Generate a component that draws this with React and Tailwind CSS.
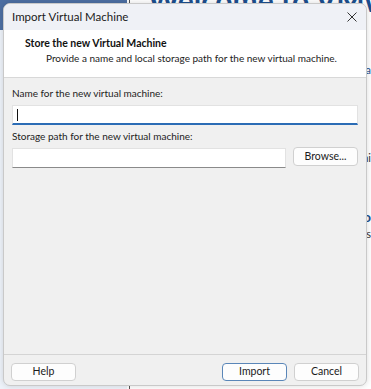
import React from 'react';

const font = { fontFamily: 'Lato, "Noto Sans", sans-serif' };

const Button = ({ children, primary, className = '' }) => (
  <button
    className={`h-[18px] rounded-[4px] bg-[#fdfdfd] text-[10.5px] text-[#1a1a1a] leading-none border ${
      primary ? 'border-[#5a86b8]' : 'border-[#d0d0d0]'
    } ${className}`}
  >
    {children}
  </button>
);

export default function App() {
  return (
    <div className="relative w-[371px] h-[389px] overflow-hidden bg-[#eef3fa]" style={font}>
      {/* background app */}
      <div className="flex h-full">
        <div className="w-[127px] flex flex-col">
          <div className="h-[30px] bg-[#4d6fa3]" />
          <div className="flex-1 bg-[#eef3fa]" />
        </div>
        <div className="w-[3px] bg-white border-r border-[#555]" />
        <div className="flex-1 bg-white relative overflow-hidden">
          <div className="absolute -top-[22px] left-[18px] text-[30px] font-bold text-[#1c4f8f] whitespace-nowrap">
            Welcome to VMware
          </div>
          <div className="absolute top-[62px] right-0 text-[11px] text-[#1c4f8f]">a</div>
          <div className="absolute top-[150px] right-0 text-[11px] text-[#333]">ni</div>
          <div className="absolute top-[206px] right-0 text-[14px] font-bold text-[#1c4f8f]">o</div>
          <div className="absolute top-[226px] right-0 text-[11px] text-[#333]">s</div>
        </div>
      </div>

      {/* dialog */}
      <div className="absolute left-[3px] top-[3px] w-[364px] h-[383px] rounded-[7px] overflow-hidden border border-[#c9c9c9] bg-[#f0f0f0] flex flex-col shadow-[0_0_6px_rgba(0,0,0,0.15)]">
        <div className="h-[26px] shrink-0 bg-[#eff1f6] flex items-center justify-between pl-[8px] pr-[9px]">
          <span className="text-[11.5px] text-[#1a1a1a]">Import Virtual Machine</span>
          <svg width="10" height="10" viewBox="0 0 10 10" className="text-[#333]">
            <path d="M0.5 0.5 L9.5 9.5 M9.5 0.5 L0.5 9.5" stroke="currentColor" strokeWidth="1" />
          </svg>
        </div>
        <div className="h-[48px] shrink-0 bg-white border-b border-[#d8d8d8] pt-[6px] pl-[21px]">
          <div className="text-[10.5px] font-bold text-[#111] leading-[15px]">Store the new Virtual Machine</div>
          <div className="text-[10px] text-[#222] leading-[15px] pl-[21px] whitespace-nowrap">
            Provide a name and local storage path for the new virtual machine.
          </div>
        </div>
        <div className="flex-1 px-[8px] pt-[8px] flex flex-col">
          <div className="text-[10px] text-[#222] leading-[15px]">Name for the new virtual machine:</div>
          <div className="mt-[4px] h-[20px] bg-white border border-[#e2e2e2] border-b-2 border-b-[#2b6cb5] flex items-center pl-[4px]">
            <div className="w-px h-[12px] bg-[#111]" />
          </div>
          <div className="mt-[4px] text-[10px] text-[#222] leading-[15px]">Storage path for the new virtual machine:</div>
          <div className="mt-[4px] flex gap-[7px] items-start">
            <div className="flex-1 h-[20px] bg-white border border-[#e2e2e2] border-b-[#8a8a8a]" />
            <Button className="w-[65px] mt-[-1px] h-[19px]">Browse...</Button>
          </div>
        </div>
        <div className="h-[31px] shrink-0 border-t border-[#d4d4d4] flex items-center px-[7px] pt-[3px]">
          <Button className="w-[65px]">Help</Button>
          <div className="flex-1" />
          <Button primary className="w-[65px]">Import</Button>
          <Button className="w-[65px] ml-[7px]">Cancel</Button>
        </div>
      </div>
    </div>
  );
}
